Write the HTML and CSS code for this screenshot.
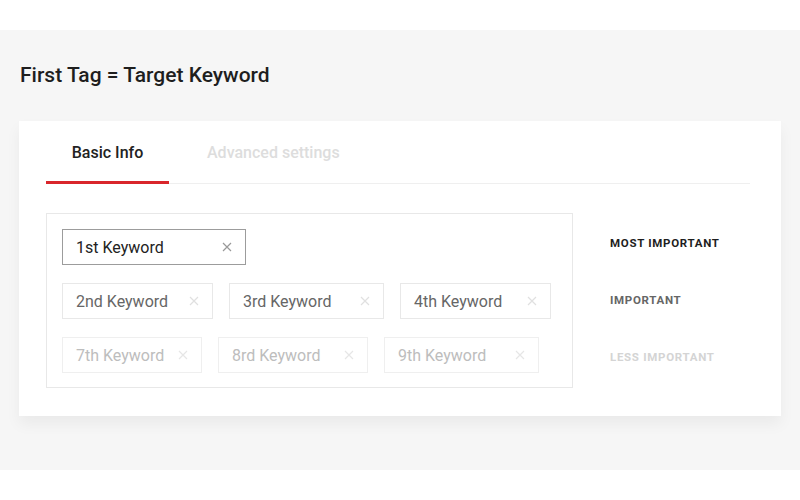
FILE: index.html
```html
<!DOCTYPE html>
<html lang="en">
<head>
    <meta charset="UTF-8">
    <meta name="viewport" content="width=device-width, initial-scale=1.0">
    <title>First Tag = Target Keyword</title>
    <link rel="stylesheet" href="styles.css">
</head>
<body>
    <div class="top-strip"></div>
    <main class="page">
        <h1 class="page-title">First Tag = Target Keyword</h1>
        <section class="card">
            <nav class="tabs">
                <span class="tab active">Basic Info</span>
                <span class="tab">Advanced settings</span>
            </nav>
            <div class="tag-area">
                <div class="tag-box">
                    <div class="tag-row">
                        <span class="chip chip-main">1st Keyword<svg class="chip-x" viewBox="0 0 10 10"><path d="M1 1L9 9M9 1L1 9"/></svg></span>
                    </div>
                    <div class="tag-row mid">
                        <span class="chip w-151">2nd Keyword<svg class="chip-x" viewBox="0 0 10 10"><path d="M1 1L9 9M9 1L1 9"/></svg></span>
                        <span class="chip w-155">3rd Keyword<svg class="chip-x" viewBox="0 0 10 10"><path d="M1 1L9 9M9 1L1 9"/></svg></span>
                        <span class="chip w-151">4th Keyword<svg class="chip-x" viewBox="0 0 10 10"><path d="M1 1L9 9M9 1L1 9"/></svg></span>
                    </div>
                    <div class="tag-row low">
                        <span class="chip w-140">7th Keyword<svg class="chip-x" viewBox="0 0 10 10"><path d="M1 1L9 9M9 1L1 9"/></svg></span>
                        <span class="chip w-150">8rd Keyword<svg class="chip-x" viewBox="0 0 10 10"><path d="M1 1L9 9M9 1L1 9"/></svg></span>
                        <span class="chip w-155">9th Keyword<svg class="chip-x" viewBox="0 0 10 10"><path d="M1 1L9 9M9 1L1 9"/></svg></span>
                    </div>
                </div>
                <ul class="levels">
                    <li class="level level-most">MOST IMPORTANT</li>
                    <li class="level level-mid">IMPORTANT</li>
                    <li class="level level-less">LESS IMPORTANT</li>
                </ul>
            </div>
        </section>
    </main>
</body>
</html>
```

FILE: styles.css
```css
* {
    margin: 0;
    padding: 0;
    box-sizing: border-box;
}
body {
    font-family: Roboto, "Liberation Sans", Arial, sans-serif;
    background-color: #fff;
    color: #222;
}
.top-strip {
    height: 30px;
}
.page {
    background-color: #f6f6f6;
    height: 440px;
    padding: 33px 19px 0 19px;
}
.page-title {
    font-size: 21px;
    font-weight: 500;
    line-height: 24px;
    color: #1e1e1e;
    margin-left: 1px;
    margin-bottom: 34px;
}
.card {
    background-color: #fff;
    padding: 20px 31px 28px 27px;
    box-shadow: 0 8px 14px rgba(0, 0, 0, 0.05);
}
.tabs {
    display: flex;
    border-bottom: 1px solid #efefef;
}
.tab {
    font-size: 16px;
    font-weight: 500;
    line-height: 24px;
    color: #ddd;
    padding: 0 14px 16px 14px;
    margin-bottom: -1px;
    border-bottom: 3px solid transparent;
}
.tab.active {
    color: #222;
    width: 123px;
    text-align: center;
    border-bottom-color: #d9262b;
    margin-right: 24px;
}
.tag-area {
    display: flex;
    margin-top: 29px;
}
.tag-box {
    width: 527px;
    border: 1px solid #e8e8e8;
    padding: 15px 15px 14px 15px;
    display: flex;
    flex-direction: column;
    gap: 18px;
}
.tag-row {
    display: flex;
    gap: 16px;
}
.chip {
    display: flex;
    align-items: center;
    height: 36px;
    padding: 0 13px 0 13px;
    border: 1px solid #e8e8e8;
    font-size: 16px;
    color: #666;
}
.chip-x {
    width: 10px;
    height: 10px;
    margin-left: auto;
    fill: none;
    stroke: #e0e0e0;
    stroke-width: 1.2;
}
.w-140 { width: 140px; }
.w-150 { width: 150px; }
.w-151 { width: 151px; }
.w-155 { width: 155px; }
.chip-main {
    width: 184px;
    border-color: #9c9c9c;
    color: #222;
}
.chip-main .chip-x {
    stroke: #999;
}
.tag-row.low .chip {
    color: #bdbdbd;
    border-color: #efefef;
}
.tag-row.low .chip-x {
    stroke: #e6e6e6;
}
.levels {
    list-style: none;
    margin-left: 37px;
    padding-top: 22px;
    display: flex;
    flex-direction: column;
    gap: 41px;
}
.level {
    font-size: 11.5px;
    font-weight: 700;
    letter-spacing: 0.7px;
    line-height: 16px;
}
.level-most {
    color: #1e1e1e;
}
.level-mid {
    color: #666;
}
.level-less {
    color: #d4d4d4;
}
```
